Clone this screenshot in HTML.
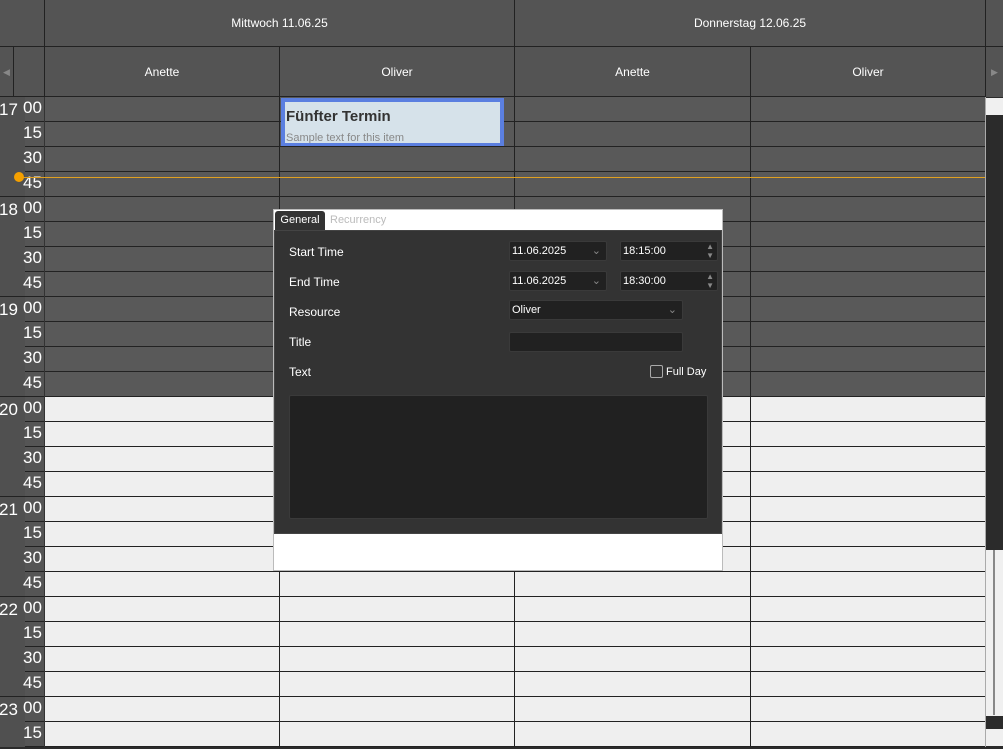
<!DOCTYPE html>
<html><head><meta charset="utf-8"><style>
*{margin:0;padding:0;box-sizing:border-box}
html,body{width:1003px;height:749px;overflow:hidden}
body{background:#2b2b2b;position:relative;font-family:"Liberation Sans",sans-serif;}
.a{position:absolute}
.hd{background:#545454;color:#fff;font-size:12px;text-align:center}
.t{color:#fff;font-size:17px}
.lbl{color:#fff;font-size:12px;position:absolute;left:14px}
.inp{position:absolute;background:#212121;border:1px solid #3a3a3a;color:#fff;font-size:11px;padding-left:2px;line-height:18px;border-radius:2px}
</style></head><body>
<div class="a hd" style="left:0;top:0;width:45px;height:47px;border-right:1px solid #222"></div>
<div class="a hd" style="left:45px;top:0;width:470px;height:47px;line-height:46px;border-right:1px solid #222">Mittwoch 11.06.25</div>
<div class="a hd" style="left:515px;top:0;width:471px;height:47px;line-height:46px;border-right:1px solid #222">Donnerstag 12.06.25</div>
<div class="a hd" style="left:986px;top:0;width:17px;height:47px"></div>
<div class="a" style="left:0;top:46px;width:1003px;height:1px;background:#222"></div>
<div class="a hd" style="left:0;top:47px;width:14px;height:50px;border-right:1px solid #222;color:#888;line-height:50px;font-size:9px">◀</div>
<div class="a hd" style="left:14px;top:47px;width:31px;height:50px;border-right:1px solid #222"></div>
<div class="a hd" style="left:45px;top:47px;width:235px;height:50px;line-height:50px;border-right:1px solid #222">Anette</div>
<div class="a hd" style="left:280px;top:47px;width:235px;height:50px;line-height:50px;border-right:1px solid #222">Oliver</div>
<div class="a hd" style="left:515px;top:47px;width:236px;height:50px;line-height:50px;border-right:1px solid #222">Anette</div>
<div class="a hd" style="left:751px;top:47px;width:235px;height:50px;line-height:50px;border-right:1px solid #222">Oliver</div>
<div class="a hd" style="left:986px;top:47px;width:17px;height:50px;line-height:50px;color:#888;font-size:9px">▶</div>
<div class="a" style="left:0;top:96px;width:986px;height:1px;background:#222"></div>
<div class="a" style="left:0;top:97px;width:985px;height:650px;overflow:hidden">
<div class="a" style="left:0;top:0;width:45px;height:650px;background:#555"></div>
<div class="a" style="left:45px;top:0;width:940px;height:300px;background:#595959"></div>
<div class="a" style="left:45px;top:300px;width:940px;height:350px;background:#efefef"></div>
<div id="g"></div>
</div>
<script>
var h='',hrs=[17,18,19,20,21,22,23],m=['00','15','30','45'];
for(var i=0;i<26;i++){var y=i*25;var hr=i%4==0;
if(hr)h+='<div class="a" style="left:0;top:'+y+'px;width:25px;height:100px;background:#505050"></div><div class="a t" style="left:-1px;top:'+(y+3)+'px">'+hrs[i/4]+'</div>';
h+='<div class="a t" style="left:23px;top:'+(y+1)+'px">'+m[i%4]+'</div>';}
for(var i=0;i<26;i++){var y=i*25;var hr=(i+1)%4==0;
h+='<div class="a" style="left:'+(hr?0:25)+'px;top:'+(y+24)+'px;width:'+(hr?985:960)+'px;height:1px;background:#222"></div>';}
[279,514,750].forEach(function(x){h+='<div class="a" style="left:'+x+'px;top:0;width:1px;height:650px;background:#222"></div>'});
h+='<div class="a" style="left:44px;top:0;width:1px;height:650px;background:#333"></div>';
document.getElementById('g').innerHTML=h;
</script>
<div class="a" style="left:18px;top:177px;width:967px;height:1px;background:#e0a020"></div>
<div class="a" style="left:14px;top:172px;width:10px;height:10px;border-radius:50%;background:#f5a000"></div>
<div class="a" style="left:281px;top:98px;width:223px;height:48px;background:#5b7fe0;padding:4px 4px 3px 4px">
<div style="background:#d6e2ea;height:41px;overflow:hidden;padding:6px 4px 0 1px">
<div style="font-weight:bold;font-size:15px;color:#333;line-height:18px">Fünfter Termin</div>
<div style="font-size:11px;color:#888;margin-top:6px">Sample text for this item</div></div></div>
<div class="a" style="left:985px;top:97px;width:18px;height:650px;background:#2b2b2b;border-left:1px solid #aaa"></div>
<div class="a" style="left:986px;top:98px;width:17px;height:17px;background:#f0f0f0"></div>
<div class="a" style="left:986px;top:550px;width:17px;height:166px;background:#f0f0f0"></div>
<div class="a" style="left:993px;top:550px;width:2px;height:165px;background:#888"></div>
<div class="a" style="left:986px;top:729px;width:17px;height:17px;background:#f0f0f0"></div>
<div class="a" style="left:273px;top:209px;width:450px;height:362px;background:#fff;border:1px solid #bbb"></div>
<div class="a" style="left:275px;top:211px;width:50px;height:20px;background:#333;color:#fff;font-size:11px;line-height:18px;text-align:center;border-radius:3px 3px 0 0">General</div>
<div class="a" style="left:330px;top:214px;font-size:11px;color:#bbb">Recurrency</div>
<div class="a" style="left:274px;top:230px;width:448px;height:304px;background:#333;border:1px solid #444">
<div class="lbl" style="top:14px">Start Time</div>
<div class="lbl" style="top:44px">End Time</div>
<div class="lbl" style="top:74px">Resource</div>
<div class="lbl" style="top:104px">Title</div>
<div class="lbl" style="top:134px">Text</div>
<div class="inp" style="left:234px;top:10px;width:98px;height:20px">11.06.2025<span style="position:absolute;right:5px;color:#888">⌄</span></div>
<div class="inp" style="left:345px;top:10px;width:98px;height:20px">18:15:00<span style="position:absolute;right:3px;top:0;color:#888;font-size:8px;line-height:9px">▲<br>▼</span></div>
<div class="inp" style="left:234px;top:40px;width:98px;height:20px">11.06.2025<span style="position:absolute;right:5px;color:#888">⌄</span></div>
<div class="inp" style="left:345px;top:40px;width:98px;height:20px">18:30:00<span style="position:absolute;right:3px;top:0;color:#888;font-size:8px;line-height:9px">▲<br>▼</span></div>
<div class="inp" style="left:234px;top:69px;width:174px;height:20px">Oliver<span style="position:absolute;right:5px;color:#888">⌄</span></div>
<div class="inp" style="left:234px;top:101px;width:174px;height:20px"></div>
<div class="a" style="left:375px;top:134px;width:13px;height:13px;border:1px solid #aaa;border-radius:2px"></div>
<div class="a" style="left:391px;top:135px;color:#fff;font-size:11px">Full Day</div>
<div class="a" style="left:14px;top:164px;width:419px;height:124px;background:#212121;border:1px solid #3a3a3a;border-radius:2px"></div>
</div>
</body></html>
